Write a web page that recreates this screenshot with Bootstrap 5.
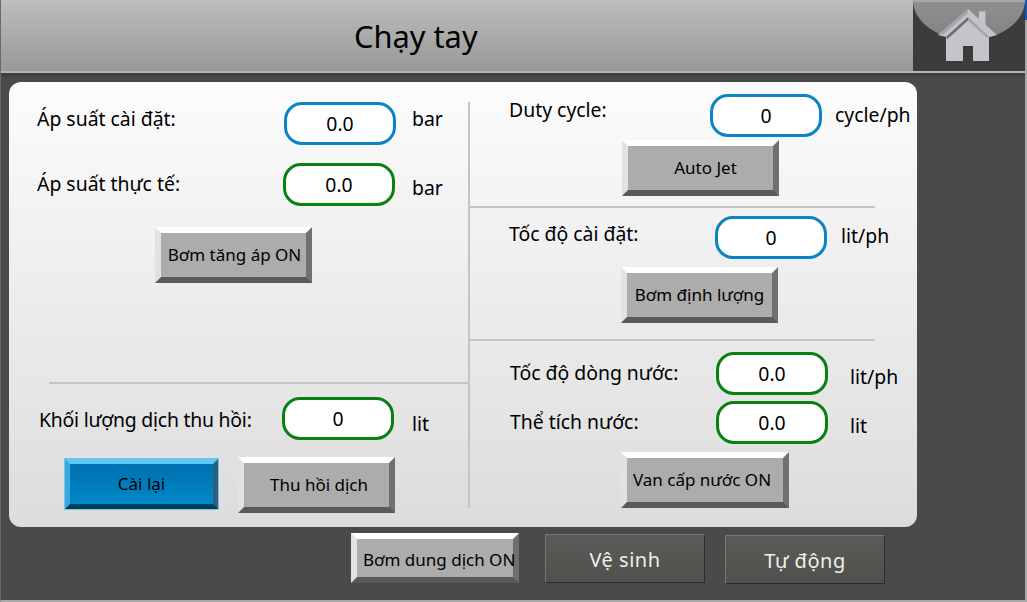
<!DOCTYPE html>
<html lang="vi">
<head>
    <meta charset="UTF-8">
    <meta name="viewport" content="width=device-width, initial-scale=1.0">
    <title>Chạy tay</title>
    <link href="https://cdn.jsdelivr.net/npm/bootstrap@5.3.0/dist/css/bootstrap.min.css" rel="stylesheet">
    <style>
        html, body {
            width: 1027px;
            height: 602px;
            overflow: hidden;
        }
        body {
            background: #4a4a4a;
            font-family: "Noto Sans", "Open Sans", sans-serif;
            color: #000;
            font-size: 19.4px;
            line-height: 24px;
        }
        .hmi-screen {
            width: 1027px;
            height: 602px;
            padding-right: 2px;
            border-left: 1px solid #6a6a6a;
            border-bottom: 2px solid #a8a8a8;
            background:
                linear-gradient(#1a50c0 20px, #a8a8a8 20px) right top / 2px 100% no-repeat,
                linear-gradient(#3c3c3c, #4a4a4a) left 73px / 100% 6px no-repeat,
                #4a4a4a;
        }
        .hmi-header {
            height: 73px;
            background: linear-gradient(#bcbebc, #989898);
            border-bottom: 2px solid #b4b4b4;
        }
        .hmi-title {
            margin-left: 353px;
            font-size: 30.8px;
            line-height: 73px;
        }
        .hmi-home {
            width: 112px;
            height: 71px;
            background: #3c3c3c;
            border: 0;
            padding: 0;
            display: block;
        }
        .hmi-panel {
            width: 908px;
            height: 445px;
            margin: 9px 0 6px 8px;
            border-radius: 12px;
            background: linear-gradient(#fcfcfc, #dcdcdc);
        }
        .hmi-left {
            width: 459px;
            height: 426px;
            flex-shrink: 0;
            padding-top: 20px;
        }
        .hmi-right {
            width: 449px;
            height: 406px;
            margin-top: 20px;
            border-left: 2px solid #c4c4c4;
        }
        .hmi-row {
            height: 43px;
        }
        .hmi-rule {
            height: 2px;
            background: #c4c4c4;
        }
        .hmi-value {
            flex: 0 0 112px;
            height: 43px;
            border: 3px solid;
            border-radius: 18px;
            background: #fff;
            line-height: 37px;
        }
        .hmi-set { border-color: #0b84c6; }
        .hmi-read { border-color: #0a8010; }
        .hmi-btn {
            display: block;
            padding: 0;
            width: 157px;
            height: 56px;
            border-style: solid;
            border-width: 6px;
            border-color: #fff #707070 #5a5a5a #e2e2e2;
            background: #acacac;
            color: #000;
            font-size: 17px;
            line-height: 20px;
            white-space: nowrap;
        }
        .hmi-btn-wide { width: 168px; }
        .hmi-btn-active {
            width: 153px;
            height: 50px;
            margin-top: 2px;
            border-width: 5px;
            border-color: #5fc8f8 #2a5f80 #023f5f #3aa8e0;
            background: linear-gradient(#0070b0, #0088c8);
            outline: 1px solid #7cc4e4;
        }
        .hmi-dark {
            display: block;
            width: 160px;
            height: 49px;
            margin-top: 1px;
            padding: 2px 0 0;
            border: 1px solid;
            border-color: #777 #2c2c2c #2c2c2c #777;
            background: linear-gradient(#5a5a56, #50504c);
            color: #eee;
            font-size: 20px;
            letter-spacing: .5px;
        }
        /* vị trí từng khối, lấy theo ảnh */
        .lbl-a { width: 247px; margin-left: 28px; margin-bottom: 9px; }
        .lbl-b { width: 246px; margin-left: 28px; margin-bottom: 2px; }
        .lbl-c { width: 243px; margin-left: 30px; margin-top: 3px; letter-spacing: -.22px; }
        .unit-a { margin-left: 16px; margin-bottom: 9px; }
        .unit-b { margin-left: 17px; margin-top: 7px; }
        .unit-c { margin-left: 18px; margin-top: 11px; }
        .row-2 { margin-top: 18px; }
        .btn-boost { margin: 21px 0 0 146px; padding-left: 2px; }
        .rule-left { margin: 99px 0 0 40px; height: 2px; }
        .row-3 { margin-top: 13px; }
        .left-btns { margin: 17px 0 0 56px; gap: 20px; }
        .btn-recover { padding-left: 5px; }
        .r-row-1 { margin: -8px 0 0 39px; }
        .r-lbl-1 { width: 201px; margin-bottom: 11px; }
        .r-unit-1 { margin-left: 13px; margin-bottom: 1px; }
        .btn-jet { margin: 3px 0 0 152px; padding-left: 10px; }
        .rule-r1 { margin-top: 10px; width: 405px; }
        .r-row-2 { margin: 8px 0 0 39px; }
        .r-lbl-2 { width: 206px; margin-bottom: 7px; }
        .r-unit-2 { margin-left: 14px; margin-bottom: 3px; }
        .btn-dose { margin: 8px 0 0 151px; }
        .rule-r2 { margin-top: 16px; width: 405px; }
        .r-row-3 { margin: 11px 0 0 40px; }
        .r-lbl-3 { width: 206px; margin-bottom: 1px; }
        .r-unit-3 { margin-left: 22px; margin-top: 7px; }
        .r-row-4 { margin: 6px 0 0 40px; }
        .btn-valve { margin: 8px 0 0 151px; padding-right: 6px; }
        .hmi-bottom { margin-left: 350px; gap: 26px; }
        .hmi-bottom .hmi-btn { height: 50px; width: 168px; padding: 4px 0 0 6px; }
        .hmi-bottom .hmi-dark + .hmi-dark { margin-left: -6px; margin-top: 2px; }
    </style>
</head>
<body>
    <div class="hmi-screen">
        <div class="hmi-header d-flex justify-content-between">
            <div class="hmi-title">Chạy tay</div>
            <button class="hmi-home" type="button" aria-label="Home">
                <svg width="112" height="71" viewBox="0 0 112 71" class="d-block">
                    <defs>
                        <linearGradient id="domeFill" x1="0" y1="0" x2="0" y2="1">
                            <stop offset="0" stop-color="#9c9c9c"/>
                            <stop offset="1" stop-color="#828282"/>
                        </linearGradient>
                    </defs>
                    <ellipse cx="56" cy="0" rx="56" ry="40" fill="url(#domeFill)"/>
                    <rect width="112" height="2" fill="#a8a8a8"/>
                    <rect x="66" y="10" width="6.5" height="15" fill="#c6c6ce"/>
                    <rect x="66" y="10" width="6.5" height="1.5" fill="#8e8e8e"/>
                    <path d="M33 37 L55 17 L76 37 L76 61 L60 61 L60 46 L50 46 L50 61 L33 61 Z" fill="#c4c4cc"/>
                    <path d="M25 35 L55 9 L84 35 L76 37 L55 17 L33 37 Z" fill="#c2c2ca"/>
                    <path d="M25 35 L55 9 L55 13 L31 34 Z" fill="#a4a4aa"/>
                    <path d="M33 37 L55 17 L55 20.5 L34.5 39 Z" fill="#6e6e70"/>
                    <path d="M55 17 L76 37 L74 38 L55 20.5 Z" fill="#a2a2a8"/>
                </svg>
            </button>
        </div>

        <div class="hmi-panel d-flex">
            <div class="hmi-left">
                <div class="hmi-row d-flex align-items-center">
                    <div class="lbl-a">Áp suất cài đặt:</div>
                    <div class="hmi-value hmi-set text-center">0.0</div>
                    <div class="unit-a">bar</div>
                </div>
                <div class="hmi-row row-2 d-flex align-items-center">
                    <div class="lbl-b">Áp suất thực tế:</div>
                    <div class="hmi-value hmi-read text-center">0.0</div>
                    <div class="unit-b">bar</div>
                </div>
                <button class="hmi-btn btn-boost" type="button">Bơm tăng áp ON</button>
                <div class="hmi-rule rule-left"></div>
                <div class="hmi-row row-3 d-flex align-items-center">
                    <div class="lbl-c">Khối lượng dịch thu hồi:</div>
                    <div class="hmi-value hmi-read text-center">0</div>
                    <div class="unit-c">lit</div>
                </div>
                <div class="left-btns d-flex align-items-start">
                    <button class="hmi-btn hmi-btn-active" type="button">Cài lại</button>
                    <button class="hmi-btn btn-recover" type="button">Thu hồi dịch</button>
                </div>
            </div>

            <div class="hmi-right">
                <div class="hmi-row r-row-1 d-flex align-items-center">
                    <div class="r-lbl-1">Duty cycle:</div>
                    <div class="hmi-value hmi-set text-center">0</div>
                    <div class="r-unit-1">cycle/ph</div>
                </div>
                <button class="hmi-btn btn-jet" type="button">Auto Jet</button>
                <div class="hmi-rule rule-r1"></div>
                <div class="hmi-row r-row-2 d-flex align-items-center">
                    <div class="r-lbl-2">Tốc độ cài đặt:</div>
                    <div class="hmi-value hmi-set text-center">0</div>
                    <div class="r-unit-2">lit/ph</div>
                </div>
                <button class="hmi-btn btn-dose" type="button">Bơm định lượng</button>
                <div class="hmi-rule rule-r2"></div>
                <div class="hmi-row r-row-3 d-flex align-items-center">
                    <div class="r-lbl-3">Tốc độ dòng nước:</div>
                    <div class="hmi-value hmi-read text-center">0.0</div>
                    <div class="r-unit-3">lit/ph</div>
                </div>
                <div class="hmi-row r-row-4 d-flex align-items-center">
                    <div class="r-lbl-3">Thể tích nước:</div>
                    <div class="hmi-value hmi-read text-center">0.0</div>
                    <div class="r-unit-3">lit</div>
                </div>
                <button class="hmi-btn hmi-btn-wide btn-valve" type="button">Van cấp nước ON</button>
            </div>
        </div>

        <div class="hmi-bottom d-flex align-items-start">
            <button class="hmi-btn" type="button">Bơm dung dịch ON</button>
            <button class="hmi-dark" type="button">Vệ sinh</button>
            <button class="hmi-dark" type="button">Tự động</button>
        </div>
    </div>

    <script src="https://cdn.jsdelivr.net/npm/bootstrap@5.3.0/dist/js/bootstrap.bundle.min.js"></script>
</body>
</html>
